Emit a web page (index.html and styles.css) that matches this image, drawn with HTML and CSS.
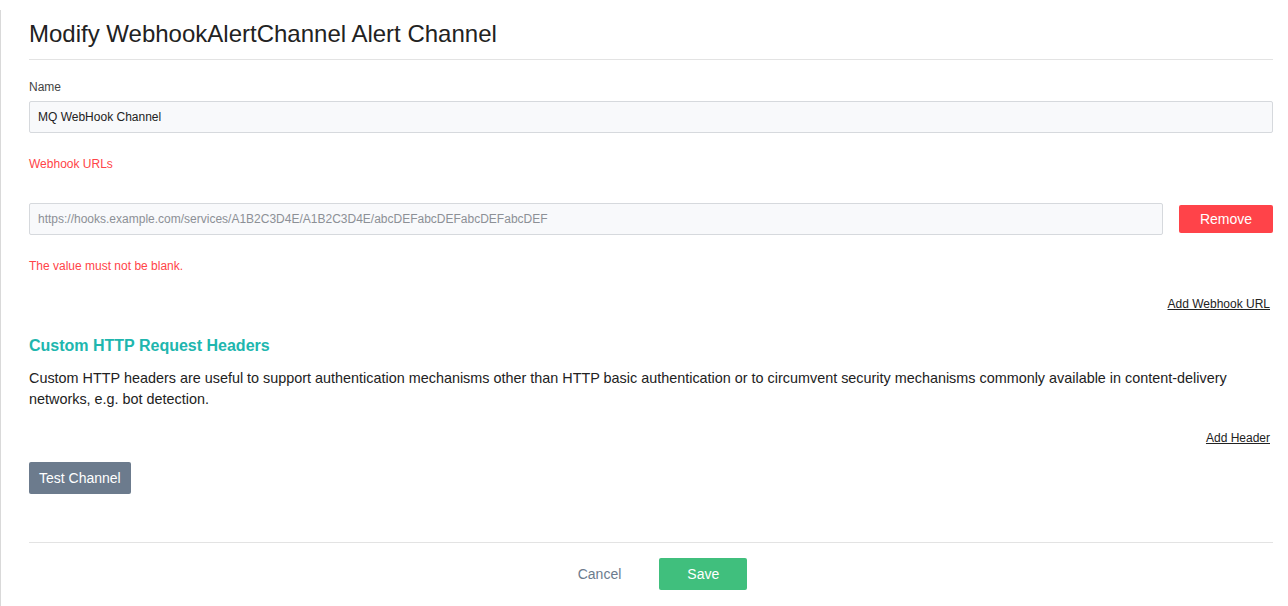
FILE: index.html
```html
<!DOCTYPE html>
<html>
<head>
<meta charset="utf-8">
<link rel="stylesheet" href="styles.css">
</head>
<body>
<div class="modal">
  <div class="header"><h2 class="title">Modify WebhookAlertChannel Alert Channel</h2></div>
  <div class="body">
    <label class="label">Name</label>
    <input class="input" type="text" value="MQ WebHook Channel">
    <div class="label red urls">Webhook URLs</div>
    <div class="url-row">
      <input class="input grow" type="text" placeholder="https://hooks.example.com/services/A1B2C3D4E/A1B2C3D4E/abcDEFabcDEFabcDEFabcDEF">
      <button class="btn btn-red">Remove</button>
    </div>
    <div class="error">The value must not be blank.</div>
    <div class="link-row first"><a class="link" href="#">Add Webhook URL</a></div>
    <h3 class="section">Custom HTTP Request Headers</h3>
    <p class="desc">Custom HTTP headers are useful to support authentication mechanisms other than HTTP basic authentication or to circumvent security mechanisms commonly available in content-delivery networks, e.g. bot detection.</p>
    <div class="link-row second"><a class="link" href="#">Add Header</a></div>
    <button class="btn btn-gray">Test Channel</button>
  </div>
  <div class="footer">
    <button class="btn btn-plain">Cancel</button>
    <button class="btn btn-green">Save</button>
  </div>
</div>
</body>
</html>
```
FILE: styles.css
```css
* { box-sizing: border-box; }
html, body { margin: 0; padding: 0; background: #fff; }
body { font-family: "Liberation Sans", Arial, sans-serif; color: #222; }
.modal {
  margin-top: 10px;
  border-left: 1px solid #d9d9d9;
  padding: 0 15px 0 28px;
  min-height: 596px;
}
.header {
  padding: 9px 0 11px;
  border-bottom: 1px solid #e3e3e3;
}
.title {
  margin: 0;
  font-size: 24px;
  line-height: 29px;
  font-weight: 400;
  color: #222;
}
.body { padding-top: 18px; }
.label {
  display: block;
  font-size: 12px;
  line-height: 18px;
  color: #444;
  margin-bottom: 5px;
}
.red { color: #ff4448; }
.urls { margin-top: 22px; margin-bottom: 30px; }
.input {
  display: block;
  width: 100%;
  height: 32px;
  border: 1px solid #d6d9dd;
  border-radius: 2px;
  background: #f8f9fb;
  padding: 0 8px;
  font-family: "Liberation Sans", Arial, sans-serif;
  font-size: 12px;
  color: #222;
  outline: none;
}
.input::placeholder { color: #8c9096; }
.url-row {
  display: flex;
  align-items: center;
  gap: 16px;
}
.grow { flex: 1; width: auto; }
.btn {
  font-family: "Liberation Sans", Arial, sans-serif;
  font-size: 14px;
  border: none;
  border-radius: 2px;
  cursor: pointer;
  color: #fff;
}
.btn-red {
  background: #ff4349;
  width: 94px;
  height: 28px;
  padding: 0;
}
.error {
  margin-top: 22px;
  font-size: 12px;
  line-height: 18px;
  color: #ff4448;
}
.link-row {
  display: flex;
  justify-content: flex-end;
  padding-right: 3px;
  font-size: 12px;
  line-height: 18px;
}
.link-row.first { margin-top: 20px; }
.link-row.second { margin-top: 19px; }
.link { color: #222; text-decoration: underline; }
.section {
  margin: 23px 0 0;
  font-size: 16px;
  line-height: 20px;
  font-weight: 700;
  color: #20b6ae;
}
.desc {
  margin: 12px 0 0;
  font-size: 14.4px;
  line-height: 21px;
  color: #222;
}
.btn-gray {
  display: block;
  margin-top: 15px;
  background: #6c7b8d;
  height: 32px;
  padding: 0 10px;
}
.footer {
  margin-top: 48px;
  border-top: 1px solid #e3e3e3;
  padding-top: 15px;
  display: flex;
  justify-content: center;
  gap: 38px;
  padding-left: 23px;
}
.btn-plain {
  background: transparent;
  color: #6c7b8d;
  height: 32px;
  padding: 0;
}
.btn-green {
  background: #40bf7d;
  width: 88px;
  height: 32px;
  padding: 0;
}
```
